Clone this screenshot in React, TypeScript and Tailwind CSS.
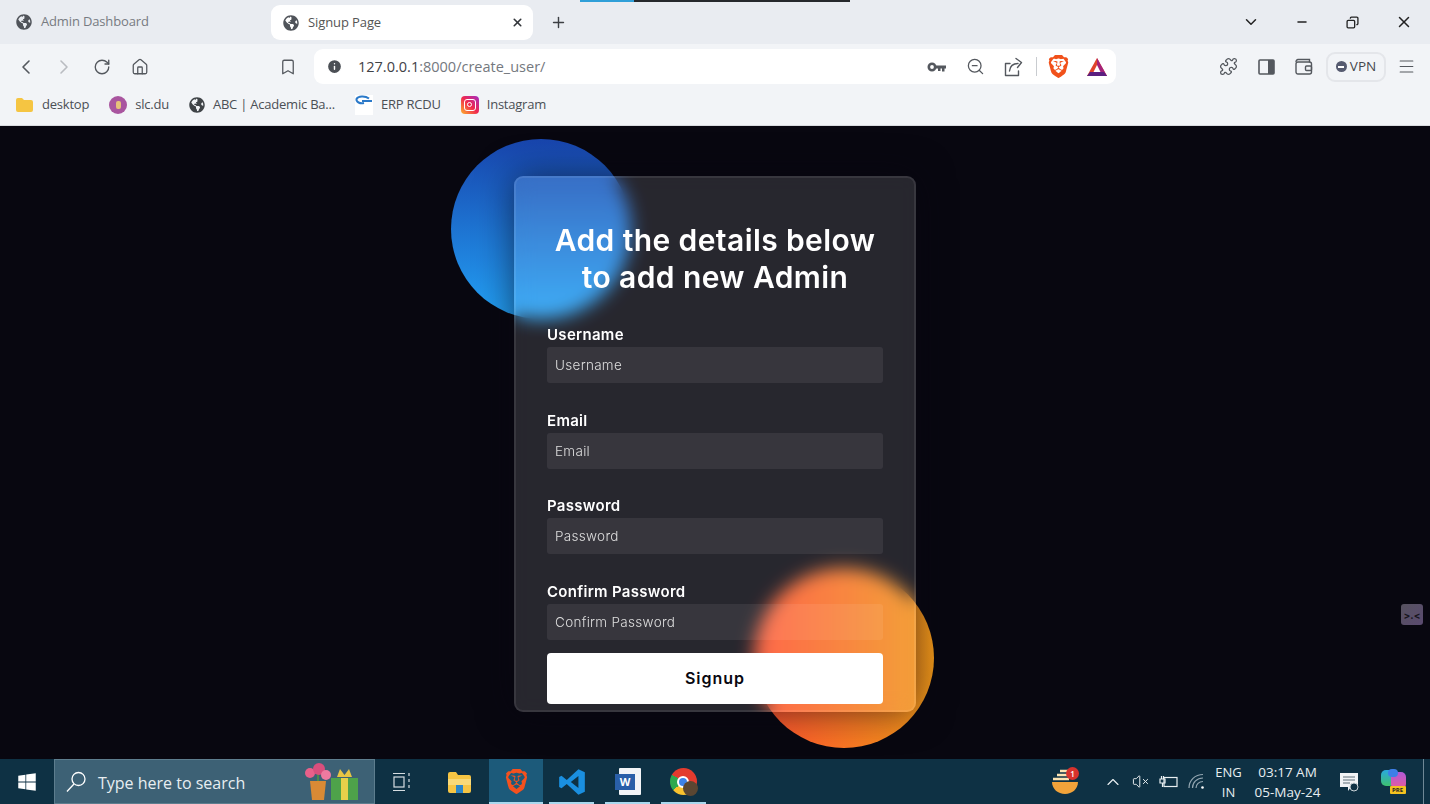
import React from 'react';
import {
  ChevronLeft, ChevronRight, RotateCw, Home, Bookmark, Info, ZoomOut, Puzzle,
  Menu, X, Plus, ChevronDown, Minus, Copy, ChevronUp, VolumeX,
} from 'lucide-react';
import { FaGlobeAmericas, FaWindows } from 'react-icons/fa';
import { SiBrave } from 'react-icons/si';

const chromeFont = "font-['Open_Sans',sans-serif]";

const Slot = ({ children, w = 'w-[38px]' }: { children: React.ReactNode; w?: string }) => (
  <div className={`${w} h-full flex items-center justify-center shrink-0`}>{children}</div>
);

const BatIcon = () => (
  <svg width="20" height="18" viewBox="0 0 20 18">
    <path d="M10 0 L20 18 H0 Z" fill="#e0432b" />
    <path d="M10 0 L20 18 H13 L10 11 Z" fill="#a3227a" />
    <path d="M0 18 H20 L17 14 H3 Z" fill="#5b1f80" />
    <path d="M10 7 L13.5 14 H6.5 Z" fill="#fff" />
  </svg>
);

const KeyIcon = () => (
  <svg width="20" height="12" viewBox="0 0 20 12" fill="none">
    <circle cx="5" cy="6" r="3.2" stroke="#54585e" strokeWidth="2.6" />
    <path d="M8 4.500H19V7.500H17.500V10.500H15V7.500H13.500V10H11V7.500H8Z" fill="#54585e" />
  </svg>
);

const ShareIcon = () => (
  <svg width="20" height="20" viewBox="0 0 20 20" fill="none" stroke="#54585e" strokeWidth="1.4" strokeLinejoin="round" strokeLinecap="round">
    <path d="M7 6.500H2.500V18.500H15.500V14" />
    <path d="M6.500 14C7 9.500 10 6.500 15 6.500" />
    <path d="M13 1.500L18.500 5.500L14.500 10.500" />
  </svg>
);

const SidebarIcon = () => (
  <svg width="17" height="16" viewBox="0 0 17 16">
    <rect x="1" y="1" width="15" height="14" rx="1" fill="none" stroke="#54585e" strokeWidth="1.600" />
    <rect x="10" y="1" width="6" height="14" fill="#54585e" />
  </svg>
);

const WalletIcon = () => (
  <svg width="18" height="17" viewBox="0 0 18 17" fill="none" stroke="#54585e" strokeWidth="1.400">
    <path d="M3 1.500H14.500V4.500" />
    <rect x="1" y="4" width="15.500" height="12" rx="2" />
    <path d="M1 4C1 2.500 2 1.500 3 1.500" />
    <rect x="10.500" y="8" width="6" height="4.500" rx="1" />
  </svg>
);

const SearchGlass = () => (
  <svg width="22" height="22" viewBox="0 0 22 22" fill="none" stroke="#fff" strokeWidth="1.300">
    <circle cx="13.500" cy="8" r="6.500" />
    <path d="M9 13L2 20.500" />
  </svg>
);

const SignalIcon = () => (
  <svg width="17" height="17" viewBox="0 0 17 17" fill="none" stroke="#93a6b1" strokeWidth="1.200">
    <path d="M1 15C1 7.500 7 1.500 15 1.500" />
    <path d="M4.500 15C4.500 9.500 9 5 15 5" />
    <path d="M8 15C8 11.500 11 8.500 15 8.500" />
    <circle cx="14.500" cy="14.500" r="1.300" fill="#fff" stroke="none" />
  </svg>
);

const BookmarkItem = ({ icon, label }: { icon: React.ReactNode; label: string }) => (
  <div className="flex items-center gap-[8px]">
    {icon}
    <span className="text-[13px] tracking-[-0.22px] text-[#4b4f55] whitespace-nowrap">{label}</span>
  </div>
);

const Field = ({ label, first }: { label: string; first?: boolean }) => (
  <div className={`flex flex-col ${first ? 'mt-[28px]' : 'mt-[26.6px]'}`}>
    <label className="h-[20px] mb-[3px] text-[15px] tracking-[0.3px] leading-[21px] font-semibold text-white">{label}</label>
    <input
      placeholder={label}
      className="h-[36px] w-full rounded-[3px] bg-white/[0.07] px-[8px] text-[13.5px] tracking-[0.3px] font-light text-white outline-none placeholder:text-[#dedede]"
    />
  </div>
);

const TaskIcon = ({ children, active }: { children: React.ReactNode; active?: boolean }) => (
  <div className={`relative h-full w-[54px] mr-[2px] flex items-center justify-center shrink-0 ${active ? 'bg-[#1c5a7a]' : ''}`}>
    {children}
    <div className={`absolute bottom-0 h-[2px] bg-[#a9d8ee] ${active ? 'left-0 right-0' : 'left-[4px] right-[5px]'}`} />
  </div>
);

export default function App() {
  return (
    <div className={`w-[1430px] h-[804px] overflow-hidden flex flex-col bg-[#080710] ${chromeFont}`}>
      {/* tab strip */}
      <div className="relative h-[44px] bg-[#e9ecf1] flex items-center shrink-0">
        <div className="absolute top-0 left-[580px] w-[270px] h-[2px] bg-[#26282c]">
          <div className="w-[54px] h-full bg-[#2f9fd8]" />
        </div>
        <div className="w-[271px] pl-[16px] flex items-center gap-[9px] shrink-0">
          <FaGlobeAmericas className="text-[#50545a]" size={16} />
          <span className="text-[13px] tracking-[-0.15px] text-[#777b81]">Admin Dashboard</span>
        </div>
        <div className="w-[262px] h-[35px] mt-[1px] bg-white rounded-[9px] flex items-center pl-[12px] pr-[9px] gap-[9px] shrink-0">
          <FaGlobeAmericas className="text-[#50545a]" size={16} />
          <span className="text-[13px] tracking-[-0.1px] text-[#555] flex-1">Signup Page</span>
          <X size={13} strokeWidth={3} className="text-[#33363a]" />
        </div>
        <Plus size={17} strokeWidth={2} className="ml-[17px] text-[#3c3f43]" />
        <div className="ml-auto flex items-center h-full">
          <Slot w="w-[51px]"><ChevronDown size={18} strokeWidth={2} className="text-[#222]" /></Slot>
          <Slot w="w-[51px]"><Minus size={14} strokeWidth={2.2} className="text-[#222]" /></Slot>
          <Slot w="w-[51px]"><Copy size={13} strokeWidth={2.4} className="text-[#222] -scale-x-100" /></Slot>
          <Slot w="w-[52px]"><X size={18} strokeWidth={2} className="text-[#222]" /></Slot>
        </div>
      </div>

      {/* toolbar */}
      <div className="h-[44px] bg-[#f2f4f7] flex items-center shrink-0 pl-[7px] pt-[1px]">
        <Slot><ChevronLeft size={24} strokeWidth={1.6} className="text-[#54585e]" /></Slot>
        <Slot><ChevronRight size={24} strokeWidth={1.6} className="text-[#b9bcc1]" /></Slot>
        <Slot><RotateCw size={18} strokeWidth={1.8} className="text-[#54585e]" /></Slot>
        <Slot><Home size={18} strokeWidth={1.7} className="text-[#54585e]" /></Slot>
        <Slot w="w-[38px] ml-[110px]"><Bookmark size={18} strokeWidth={1.7} className="text-[#54585e]" /></Slot>
        <div className="ml-[7px] w-[802px] h-[35px] bg-white rounded-[9px] flex items-center pl-[12px] pr-[1px]">
          <Info size={17} fill="#4b4f55" stroke="#fff" strokeWidth={2} />
          <span className="ml-[15px] text-[14.5px] text-[#3f4246]">
            127.0.0.1<span className="text-[#74787e]">:8000/create_user/</span>
          </span>
          <div className="ml-auto flex items-center h-full">
            <Slot><KeyIcon /></Slot>
            <Slot><ZoomOut size={19} strokeWidth={1.6} className="text-[#54585e]" /></Slot>
            <Slot><ShareIcon /></Slot>
            <div className="ml-[4px] w-px h-[19px] bg-[#c9ccd0]" />
            <Slot w="w-[42px]"><SiBrave size={23} className="text-[#f1511b]" /></Slot>
            <Slot w="w-[36px]"><BatIcon /></Slot>
          </div>
        </div>
        <Slot w="w-[38px] ml-[93px]"><Puzzle size={19} strokeWidth={1.6} className="text-[#54585e]" /></Slot>
        <Slot><SidebarIcon /></Slot>
        <Slot><WalletIcon /></Slot>
        <div className="w-[60px] h-[30px] ml-[3px] rounded-[9px] border-2 border-[#e4e6ea] flex items-center justify-center gap-[3px] shrink-0">
          <div className="w-[11px] h-[11px] rounded-full bg-[#565b70] flex items-center justify-center">
            <div className="w-[6px] h-[2px] bg-white" />
          </div>
          <span className="text-[13.5px] text-[#45484d]">VPN</span>
        </div>
        <Slot w="w-[41px]"><Menu size={19} strokeWidth={1.4} className="text-[#54585e]" /></Slot>
      </div>

      {/* bookmarks */}
      <div className="h-[33px] bg-[#f2f4f7] border-b border-[#d9dbdf] box-content flex items-center pl-[15px] pb-[4px] gap-[20px] shrink-0">
        <BookmarkItem
          icon={
            <svg width="19" height="16" viewBox="0 0 19 16">
              <path d="M1 3a2 2 0 0 1 2-2h4l2 2h7a2 2 0 0 1 2 2v8a2 2 0 0 1-2 2H3a2 2 0 0 1-2-2z" fill="#f5c542" />
            </svg>
          }
          label="desktop"
        />
        <BookmarkItem
          icon={
            <div className="w-[18px] h-[18px] rounded-full bg-[#a9559f] flex items-center justify-center">
              <div className="w-[5px] h-[8px] rounded-[2px] bg-[#e6c07a]" />
            </div>
          }
          label="slc.du"
        />
        <BookmarkItem icon={<FaGlobeAmericas className="text-[#3f4347]" size={16} />} label="ABC | Academic Ba..." />
        <BookmarkItem
          icon={
            <div className="w-[18px] h-[20px] bg-white flex items-start justify-center">
              <svg width="18" height="12" viewBox="0 0 18 12" fill="none">
                <path d="M17 6 H7 M14 3.5 C10 .5 3 1 1.5 4 C1 7 5 9 9 8" stroke="#2a79c9" strokeWidth="2" />
              </svg>
            </div>
          }
          label="ERP RCDU"
        />
        <BookmarkItem
          icon={
            <div className="w-[18px] h-[18px] rounded-[4px] bg-[linear-gradient(45deg,#fdb22d,#f0284e_50%,#a32cc4)] flex items-center justify-center">
              <div className="w-[12px] h-[12px] rounded-[3px] border-[1.5px] border-white flex items-center justify-center">
                <div className="w-[5px] h-[5px] rounded-full border-[1.5px] border-white" />
              </div>
            </div>
          }
          label="Instagram"
        />
      </div>

      {/* page */}
      <div className="relative flex-1 bg-[#080710] flex justify-center pt-[50px] font-['Inter',sans-serif]">
        <div className="relative w-[402px] h-[536px]">
          <div className="absolute -left-[63px] -top-[37px] w-[180px] h-[180px] rounded-full bg-[linear-gradient(#1845ad,#23a2f6)]" />
          <div className="absolute left-[240px] top-[392px] w-[180px] h-[180px] rounded-full bg-[linear-gradient(to_right,#ff512f,#f09819)]" />
          <form className="relative h-full rounded-[9px] border-2 border-white/[0.08] bg-white/[0.13] backdrop-blur-[9px] px-[31px] pt-[44px] pb-[6px] shadow-[0_0_36px_rgba(8,7,16,0.6)]">
            <h3 className="text-center text-[30px] leading-[37px] tracking-[0.4px] font-semibold text-white">
              Add the details below
              <br />
              to add new Admin
            </h3>
            <Field label="Username" first />
            <Field label="Email" />
            <Field label="Password" />
            <Field label="Confirm Password" />
            <button type="button" className="mt-[13px] w-full h-[51px] rounded-[4px] bg-white text-[16px] font-semibold text-[#080710] tracking-[1px]">
              Signup
            </button>
          </form>
        </div>
        <div className="absolute left-[1401px] top-[478px] w-[22px] h-[21px] rounded-[3px] bg-[linear-gradient(135deg,#56525f,#5a4a70)] flex items-center justify-center">
          <span className="text-[10px] leading-none text-[#17151d] font-bold">&gt;.&lt;</span>
        </div>
      </div>

      {/* taskbar */}
      <div className="relative h-[45px] bg-[#0e3144] flex items-center shrink-0">
        <Slot w="w-[54px]"><FaWindows size={20} className="text-white" /></Slot>
        <div className="w-[321px] h-full bg-[#3d6175] border border-[#5d7d8e] flex items-center pl-[10px] shrink-0">
          <SearchGlass />
          <span className="ml-[11px] pt-[3px] text-[16px] text-[#e8eef1] flex-1">Type here to search</span>
          <svg width="60" height="38" viewBox="0 0 60 38" className="mr-[13px]">
            <path d="M9 18H25L23 37H11Z" fill="#d98a35" />
            <path d="M17 18V10" stroke="#4c8a4a" strokeWidth="2" />
            <circle cx="9" cy="10" r="5" fill="#e9608a" />
            <circle cx="18" cy="6" r="6" fill="#d94f7d" />
            <circle cx="25" cy="12" r="5" fill="#ef7aa0" />
            <rect x="30" y="15" width="27" height="22" fill="#4ea24a" />
            <rect x="40" y="15" width="7" height="22" fill="#e7d04a" />
            <path d="M36 14 L39 6 L43.500 12 L48 6 L51 14 Z" fill="#e7c544" />
          </svg>
        </div>
        <Slot w="w-[54px]">
          <svg width="20" height="20" viewBox="0 0 20 20" fill="none" stroke="#d6dde1" strokeWidth="1.2">
            <path d="M1 1.500h12M1 18.500h12" />
            <rect x="2" y="5" width="10" height="10" />
            <path d="M17 1v3M17 7v3M17 13v3" />
          </svg>
        </Slot>
        <Slot w="w-[60px]">
          <svg width="25" height="22" viewBox="0 0 25 22">
            <path d="M1 3a2 2 0 0 1 2-2h6l2 3h11a2 2 0 0 1 2 2v14a2 2 0 0 1-2 2H3a2 2 0 0 1-2-2z" fill="#f6c544" />
            <rect x="1" y="8" width="23" height="6" fill="#f9d978" />
            <rect x="9" y="14" width="7" height="8" fill="#2b86c9" />
          </svg>
        </Slot>
        <TaskIcon active><SiBrave size={25} className="text-[#f4511e]" /></TaskIcon>
        <TaskIcon>
          <svg width="28" height="28" viewBox="0 0 24 24">
            <path d="M17.500 1 L23 3.600 V20.400 L17.500 23 L7.500 13.800 L3 17.300 L1 16.200 V7.800 L3 6.700 L7.500 10.200 Z M17.500 6.800 L11 12 L17.500 17.200 Z" fill="#1a8fe0" fillRule="evenodd" />
          </svg>
        </TaskIcon>
        <TaskIcon>
          <div className="relative w-[26px] h-[28px]">
            <div className="absolute right-0 top-0 w-[22px] h-[27px] bg-[#f2f4f7] rounded-[1px]" />
            <div className="absolute left-0 top-[6px] w-[20px] h-[16px] bg-[#2a5fa8] flex items-center justify-center text-[11px] font-bold text-white leading-none">
              W
            </div>
          </div>
        </TaskIcon>
        <TaskIcon>
          <div className="relative -ml-[2px] w-[27px] h-[27px] rounded-full bg-[conic-gradient(#e33b2e_0_120deg,#f9c22e_120deg_230deg,#2da94f_230deg_300deg,#e33b2e_300deg)] flex items-center justify-center">
            <div className="w-[12px] h-[12px] rounded-full bg-[#3d82e8] border-2 border-white" />
            <div className="absolute -right-[1px] -bottom-[1px] w-[15px] h-[15px] rounded-full bg-[#5a4632]" />
          </div>
        </TaskIcon>

        <div className="ml-auto flex items-center h-full pr-[6px] text-[#e8eef1]">
          <div className="relative mr-[24px]">
            <svg width="28" height="26" viewBox="0 0 28 26">
              <path d="M1 13h26c0 7-6 12-13 12S1 20 1 13z" fill="#f2a33a" />
              <path d="M6 6h12M2 10h16M9 2h8" stroke="#fbe3b3" strokeWidth="2.500" />
            </svg>
            <div className="absolute -top-[2px] right-0 w-[13px] h-[13px] rounded-full bg-[#d7322d] text-white text-[8px] leading-[13px] text-center font-semibold">
              1
            </div>
          </div>
          <ChevronUp size={20} strokeWidth={1.4} className="mr-[8.5px]" />
          <VolumeX size={17} strokeWidth={1.4} className="mr-[10px]" />
          <svg width="19" height="15" viewBox="0 0 19 15" fill="none" stroke="#e8eef1" strokeWidth="1.200" className="mr-[10px]">
            <rect x="5" y="3.500" width="13" height="9" />
            <path d="M1 5h5v4H1zM2.500 5V2M4.500 5V2M3.500 9v4" />
          </svg>
          <div className="mr-[8px]"><SignalIcon /></div>
          <div className="w-[32px] text-center text-[13px] leading-[20px] mr-[4px]">
            <div>ENG</div>
            <div>IN</div>
          </div>
          <div className="w-[78px] text-center text-[13.5px] leading-[20px] mr-[12px]">
            <div>03:17 AM</div>
            <div>05-May-24</div>
          </div>
          <svg width="20" height="20" viewBox="0 0 20 20" className="mr-[22px]">
            <path d="M1 1h18v14h-7l-3 4v-4H1z" fill="#f2f4f6" />
            <path d="M4 5h12M4 8h12M4 11h7" stroke="#5f6f78" strokeWidth="1.100" />
            <circle cx="15" cy="15" r="4" fill="#0e3144" stroke="#c9d2d7" strokeWidth="1" />
          </svg>
          <div className="relative w-[25px] h-[25px] mr-[17.5px]">
            <div className="absolute left-0 top-[1px] w-[14px] h-[16px] rounded-[5px] bg-[linear-gradient(#2aa9e0,#3ec06f)]" />
            <div className="absolute right-0 top-[3px] w-[15px] h-[17px] rounded-[5px] bg-[linear-gradient(#b05ad8,#e85a9b)]" />
            <div className="absolute left-[7px] top-0 w-[10px] h-[8px] rounded-[4px] bg-[#3d7fe8]" />
            <div className="absolute right-0 bottom-0 w-[16px] h-[8px] rounded-[1px] bg-[#f4c21f] text-[6px] leading-[8px] text-center font-bold text-[#222]">
              PRE
            </div>
          </div>
          <div className="w-px h-full bg-[#6f8896]" />
        </div>
      </div>
    </div>
  );
}
